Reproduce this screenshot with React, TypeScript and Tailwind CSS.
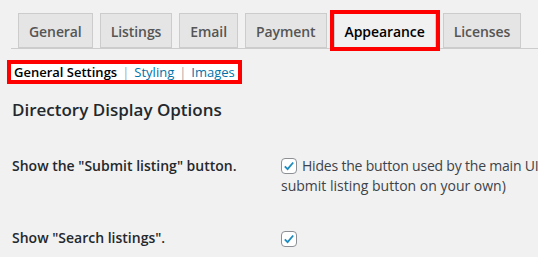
import React from "react";

const tabs = ["General", "Listings", "Email", "Payment", "Appearance", "Licenses"];

function Check() {
  return (
    <span className="shrink-0 w-[16px] h-[16px] border border-[#8c8f94] rounded-[4px] bg-white flex items-center justify-center">
      <svg viewBox="0 0 20 20" width="14" height="14">
        <path d="M4 10.5 L8 14.5 L16 5" fill="none" stroke="#1e8cbe" strokeWidth="2.6" />
      </svg>
    </span>
  );
}

export default function App() {
  return (
    <div
      className="w-[538px] h-[257px] overflow-hidden bg-[#f1f1f1] text-[#3c434a]"
      style={{ fontFamily: '"Open Sans", "Noto Sans", sans-serif' }}
    >
      <div className="pl-[11px] pt-[14px]">
        <div className="flex border-b border-[#cccccc] h-[35px] items-end">
          {tabs.map((t) => {
            const active = t === "Appearance";
            return (
              <div key={t} className="relative ml-[7px]">
                <div
                  className={
                    "h-[35px] px-[10px] border border-[#cccccc] text-[14px] font-semibold leading-[24px] pt-[6px] tracking-[-0.08px] " +
                    (active
                      ? "bg-[#f1f1f1] text-black border-b-[#f1f1f1]"
                      : "bg-[#e5e5e5] text-[#555555]")
                  }
                >
                  {t}
                </div>
                {active && (
                  <div className="absolute left-[-4px] right-[-4px] top-[-3px] bottom-[-3px] border-[4px] border-[#ff0000] pointer-events-none" />
                )}
              </div>
            );
          })}
        </div>
      </div>
      <div className="pl-[7px] pt-[10px]">
        <div className="inline-flex items-center border-[4px] border-[#ff0000] bg-white h-[24px] pl-[3px] pr-[3px] text-[13px] leading-[16px]">
          <span className="font-semibold text-black">General Settings</span>
          <span className="text-[#a7aaad] mx-[5px]">|</span>
          <span className="text-[#0073aa]">Styling</span>
          <span className="text-[#a7aaad] mx-[5px]">|</span>
          <span className="text-[#0073aa]">Images</span>
        </div>
      </div>
      <div className="pl-[12px] pt-[16px] text-[17px] font-semibold text-[#23282d] leading-[20px]">
        Directory Display Options
      </div>
      <div className="pl-[12px] flex mt-[36px]">
        <div className="shrink-0 w-[269px] text-[14px] font-semibold text-[#23282d] leading-[20px]">
          Show the "Submit listing" button.
        </div>
        <div className="flex-1 min-w-0 text-[14px] leading-[20px] text-[#3c434a] whitespace-nowrap">
          <div className="flex items-center gap-[5px]">
            <Check />
            <span className="tracking-[-0.2px]">Hides the button used by the main UI</span>
          </div>
          <div>submit listing button on your own)</div>
        </div>
      </div>
      <div className="pl-[12px] flex mt-[30px]">
        <div className="shrink-0 w-[269px] text-[14px] font-semibold text-[#23282d] leading-[20px] pt-[2px]">
          Show "Search listings".
        </div>
        <div className="flex-1 pt-[5px]">
          <Check />
        </div>
      </div>
    </div>
  );
}
